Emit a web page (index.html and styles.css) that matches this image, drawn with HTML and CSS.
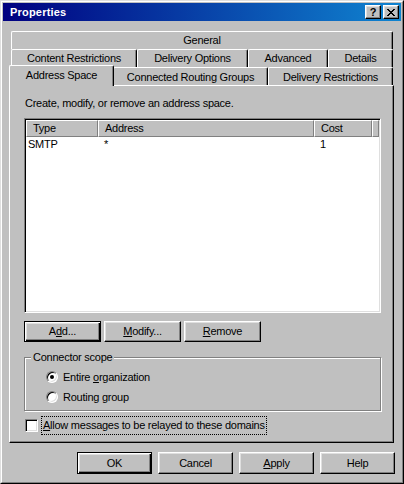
FILE: index.html
```html
<!DOCTYPE html>
<html>
<head>
<meta charset="utf-8">
<link rel="stylesheet" href="styles.css">
</head>
<body>
<div class="win">
  <div class="win-in">
    <div class="title">
      <span class="title-text">Properties</span>
      <div class="tbtns">
        <div class="tbtn"><span class="q">?</span></div>
        <div class="tbtn">
          <svg width="8" height="7" viewBox="0 0 8 7"><path d="M0 0h2v1H0z M6 0h2v1H6z M1 1h2v1H1z M5 1h2v1H5z M2 2h4v1H2z M3 3h2v1H3z M2 4h4v1H2z M1 5h2v1H1z M5 5h2v1H5z M0 6h2v1H0z M6 6h2v1H6z" fill="#000"/></svg>
        </div>
      </div>
    </div>
    <div class="content">
      <div class="tabs">
        <div class="trow">
          <div class="tab t-general">General</div>
        </div>
        <div class="trow">
          <div class="tab t-content">Content Restrictions</div>
          <div class="tab t-delopt">Delivery Options</div>
          <div class="tab t-adv">Advanced</div>
          <div class="tab t-det">Details</div>
        </div>
        <div class="trow">
          <div class="tab t-addr sel">Address Space</div>
          <div class="tab t-conn">Connected Routing Groups</div>
          <div class="tab t-delres">Delivery Restrictions</div>
        </div>
      </div>
      <div class="panel">
        <div class="desc">Create, modify, or remove an address space.</div>
        <div class="list">
          <div class="lhead">
            <div class="hc c-type">Type</div>
            <div class="hc c-addr">Address</div>
            <div class="hc c-cost">Cost</div>
            <div class="hc c-fill"></div>
          </div>
          <div class="lrow">
            <div class="rc c-type first">SMTP</div>
            <div class="rc c-addr">*</div>
            <div class="rc c-cost">1</div>
          </div>
        </div>
        <div class="btnrow">
          <div class="btn def small">A<u>d</u>d...</div>
          <div class="btn small"><u>M</u>odify...</div>
          <div class="btn small"><u>R</u>emove</div>
        </div>
        <fieldset class="group">
          <legend>Connector scope</legend>
          <div class="ropt first-opt"><span class="radio on"></span><span>Entire <u>o</u>rganization</span></div>
          <div class="ropt"><span class="radio"></span><span>Routing group</span></div>
        </fieldset>
        <div class="chkrow">
          <span class="chk"></span>
          <span class="focus"><u>A</u>llow messages to be relayed to these domains</span>
        </div>
      </div>
      <div class="footer">
        <div class="btn def">OK</div>
        <div class="btn">Cancel</div>
        <div class="btn"><u>A</u>pply</div>
        <div class="btn">Help</div>
      </div>
    </div>
  </div>
</div>
</body>
</html>
```
FILE: styles.css
```css
html, body {
  margin: 0;
  padding: 0;
}
body {
  background: #c0c0c0;
  font: 11px "Liberation Sans", Arial, sans-serif;
  letter-spacing: -0.25px;
  color: #000;
}
.win {
  width: 404px;
  height: 484px;
  box-sizing: border-box;
  border: 1px solid;
  border-color: #dfdfdf #000 #000 #dfdfdf;
  background: #c0c0c0;
}
.win-in {
  height: 100%;
  box-sizing: border-box;
  border: 1px solid;
  border-color: #fff #808080 #808080 #fff;
  padding: 1px;
}
.title {
  height: 18px;
  display: flex;
  align-items: center;
  background: linear-gradient(to right, #000080, #1084d0);
  padding-left: 7px;
}
.title-text {
  color: #fff;
  font-weight: bold;
  font-size: 11px;
  line-height: 13px;
  letter-spacing: 0.2px;
}
.tbtns {
  margin-left: auto;
  display: flex;
  gap: 2px;
  padding-right: 2px;
}
.tbtn {
  width: 16px;
  height: 14px;
  box-sizing: border-box;
  border: 1px solid;
  border-color: #fff #000 #000 #fff;
  box-shadow: inset -1px -1px 0 #808080, inset 1px 1px 0 #dfdfdf;
  background: #c0c0c0;
  display: flex;
  align-items: center;
  justify-content: center;
}
.tbtn svg {
  display: block;
}
.q {
  font-weight: bold;
  font-size: 11px;
  line-height: 11px;
  letter-spacing: 0;
}
.content {
  padding: 10px 0 0 6px;
}
.tabs {
  padding-left: 2px;
}
.trow {
  display: flex;
  height: 18px;
  align-items: flex-start;
}
.tab {
  height: 18px;
  box-sizing: border-box;
  border-top: 1px solid #fff;
  border-left: 1px solid #fff;
  border-right: 1px solid #000;
  border-radius: 2px 2px 0 0;
  box-shadow: inset -1px 0 0 #808080;
  background: #c0c0c0;
  display: flex;
  align-items: center;
  justify-content: center;
  line-height: 13px;
  white-space: nowrap;
}
.t-general { width: 382px; }
.t-content { width: 126px; }
.t-delopt { width: 111px; }
.t-adv { width: 80px; }
.t-det { width: 65px; }
.t-addr { width: 102px; }
.t-conn { width: 155px; padding-top: 1px; }
.t-delres { width: 125px; padding-top: 1px; }
.tab.sel {
  width: 105px;
  height: 21px;
  margin: -2px -1px 0 -2px;
  position: relative;
  z-index: 1;
  align-items: flex-start;
  padding-top: 3px;
}
.panel {
  width: 385px;
  height: 358px;
  box-sizing: border-box;
  border: 1px solid;
  border-color: #fff #000 #000 #fff;
  box-shadow: inset -1px -1px 0 #808080;
}
.desc {
  margin: 11px 0 0 15px;
  line-height: 13px;
}
.list {
  margin: 8px 0 0 14px;
  width: 357px;
  height: 195px;
  box-sizing: border-box;
  border: 1px solid;
  border-color: #808080 #fff #fff #808080;
  background: #fff;
  box-shadow: inset 1px 1px 0 #000, inset -1px -1px 0 #dfdfdf;
  padding: 1px;
}
.lhead {
  display: flex;
  height: 17px;
}
.hc {
  box-sizing: border-box;
  height: 17px;
  background: #c0c0c0;
  border: 1px solid;
  border-color: #fff #808080 #808080 #fff;
  padding-left: 6px;
  line-height: 14px;
}
.c-type { width: 72px; }
.c-addr { width: 216px; }
.c-cost { width: 58px; }
.c-fill { width: 7px; padding: 0; }
.lrow {
  display: flex;
  height: 14px;
  margin-top: 0;
}
.rc {
  box-sizing: border-box;
  padding-left: 6px;
  line-height: 14px;
}
.rc.first {
  padding-left: 2px;
}
.btnrow {
  display: flex;
  gap: 3px;
  margin: 8px 0 0 14px;
}
.btn {
  width: 75px;
  height: 22px;
  box-sizing: border-box;
  border: 1px solid;
  border-color: #fff #000 #000 #fff;
  box-shadow: inset -1px -1px 0 #808080, inset 1px 1px 0 #dfdfdf;
  background: #c0c0c0;
  display: flex;
  align-items: center;
  justify-content: center;
  line-height: 13px;
}
.btn.small {
  width: 77px;
  height: 21px;
}
.btn.def {
  border-color: #000;
  box-shadow: inset 1px 1px 0 #fff, inset -1px -1px 0 #000, inset -2px -2px 0 #808080, inset 2px 2px 0 #dfdfdf;
}
.group {
  margin: 9px 0 0 14px;
  width: 357px;
  box-sizing: border-box;
  border: 1px solid #808080;
  box-shadow: 1px 1px 0 #fff, inset 1px 1px 0 #fff;
  padding: 0 0 6px 0;
  min-width: 0;
}
.group legend {
  margin-left: 6px;
  padding: 0 2px;
  line-height: 13px;
  background: #c0c0c0;
}
.ropt {
  display: flex;
  align-items: center;
  height: 14px;
  margin: 6px 0 0 21px;
  gap: 5px;
  line-height: 13px;
}
.radio {
  width: 12px;
  height: 12px;
  box-sizing: border-box;
  border-radius: 50%;
  border: 1px solid;
  border-color: #808080 #fff #fff #808080;
  background: #fff;
  box-shadow: inset 1px 1px 0 #000, inset -1px -1px 0 #dfdfdf;
  display: flex;
  align-items: center;
  justify-content: center;
}
.radio.on::after {
  content: "";
  width: 4px;
  height: 4px;
  border-radius: 50%;
  background: #000;
}
.chkrow {
  display: flex;
  align-items: center;
  height: 19px;
  margin: 5px 0 0 15px;
}
.chk {
  width: 13px;
  height: 13px;
  box-sizing: border-box;
  border: 1px solid;
  border-color: #808080 #fff #fff #808080;
  background: #fff;
  box-shadow: inset 1px 1px 0 #000, inset -1px -1px 0 #dfdfdf;
  margin-right: 3px;
}
.focus {
  border: 1px dotted #000;
  padding: 2px 1px;
  line-height: 13px;
}
.footer {
  display: flex;
  justify-content: flex-end;
  gap: 6px;
  padding-right: 6px;
  margin-top: 9px;
}
```
